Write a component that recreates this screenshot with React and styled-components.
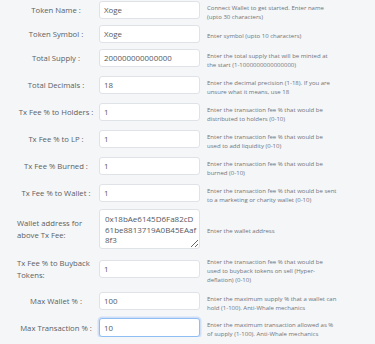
import React from 'react';
import styled, { createGlobalStyle } from 'styled-components';

const GlobalStyle = createGlobalStyle`
    html, body {
        margin: 0;
        padding: 0;
        background: #f5f6f8;
    }
    body {
        font-family: "Open Sans", "Liberation Sans", sans-serif;
    }
`;

const FormStyle = styled.div`
    width: 375px;
    box-sizing: border-box;
    padding: 0 0 0 17px;
`;

const RowStyle = styled.div`
    display: grid;
    grid-template-columns: 78px 101px 133px;
    grid-template-rows: ${p => p.h || 18}px;
    column-gap: 4px;
    align-items: center;
    height: ${p => p.h || 18}px;
    margin-top: ${p => p.mt || 0}px;
`;

const LabelStyle = styled.div`
    font-size: 7.7px;
    color: #5a5f64;
    text-align: ${p => p.wrap ? 'left' : 'center'};
    line-height: ${p => p.wrap ? '12px' : '10px'};
    white-space: ${p => p.wrap ? 'normal' : 'nowrap'};
`;

const InputStyle = styled.input`
    box-sizing: border-box;
    width: 100%;
    height: 100%;
    margin: 0;
    padding: 0 4px;
    border: 1px solid ${p => p.focus ? '#8fbef5' : '#dfe2e6'};
    border-radius: 3px;
    background: #fff;
    box-shadow: ${p => p.focus ? '0 0 0 1.5px rgba(110, 165, 240, 0.28)' : 'none'};
    font-family: "Open Sans", "Liberation Sans", sans-serif;
    font-size: 7.9px;
    color: #555a5f;
    outline: none;
`;

const TextAreaStyle = styled.textarea`
    box-sizing: border-box;
    width: 100%;
    height: 100%;
    margin: 0;
    padding: 4px 2px 4px 5px;
    border: 1px solid #dfe2e6;
    border-radius: 3px;
    background: #fff;
    font-family: "Open Sans", "Liberation Sans", sans-serif;
    font-size: 8px;
    line-height: 10.7px;
    color: #555a5f;
    resize: vertical;
    outline: none;
    overflow: hidden;
`;

const HelpStyle = styled.div`
    padding: 5px 0 0 3px;
    font-size: 6px;
    line-height: 9px;
    color: #6f7479;
`;

const rows = [
    { label: 'Token Name :', value: 'Xoge', help: 'Connect Wallet to get started. Enter name (upto 30 characters)', mt: 1 },
    { label: 'Token Symbol :', value: 'Xoge', help: 'Enter symbol (upto 10 characters)', mt: 6 },
    { label: 'Total Supply :', value: '200000000000000', help: 'Enter the total supply that will be minted at the start (1-1000000000000000)', mt: 6 },
    { label: 'Total Decimals :', value: '18', help: 'Enter the decimal precision (1-18). If you are unsure what it means, use 18', mt: 9 },
    { label: 'Tx Fee % to Holders :', value: '1', help: 'Enter the transaction fee % that would be distributed to holders (0-10)', mt: 9 },
    { label: 'Tx Fee % to LP :', value: '1', help: 'Enter the transaction fee % that would be used to add liquidity (0-10)', mt: 9 },
    { label: 'Tx Fee % Burned :', value: '1', help: 'Enter the transaction fee % that would be burned (0-10)', mt: 9 },
    { label: 'Tx Fee % to Wallet :', value: '1', help: 'Enter the transaction fee % that would be sent to a marketing or charity wallet (0-10)', mt: 9 },
    { label: 'Wallet address for above Tx Fee:', value: '0x18bAe6145D6Fa82cD61be8813719A0B45EAaf8f3', help: 'Enter the wallet address', mt: 7, h: 40, area: true, wrap: true },
    { label: 'Tx Fee % to Buyback Tokens:', value: '1', help: 'Enter the transaction fee % that would be used to buyback tokens on sell (Hyper-deflation) (0-10)', mt: 11, wrap: true },
    { label: 'Max Wallet % :', value: '100', help: 'Enter the maximum supply % that a wallet can hold (1-100). Anti-Whale mechanics', mt: 14 },
    { label: 'Max Transaction % :', value: '10', help: 'Enter the maximum transaction allowed as % of supply (1-100). Anti-Whale mechanics', mt: 8, h: 19, focus: true },
];

const TokenForm = () => {
    return(
        <FormStyle className="token-form">
            { rows.map((r) => (
                <RowStyle key={r.label} mt={r.mt} h={r.h}>
                    <LabelStyle wrap={r.wrap}>{ r.label }</LabelStyle>
                    { r.area
                        ? <TextAreaStyle defaultValue={r.value} />
                        : <InputStyle type="text" defaultValue={r.value} focus={r.focus} />
                    }
                    <HelpStyle>{ r.help }</HelpStyle>
                </RowStyle>
            )) }
        </FormStyle>
    );
}

const App = () => (
    <>
        <GlobalStyle />
        <TokenForm />
    </>
);

export default App;
